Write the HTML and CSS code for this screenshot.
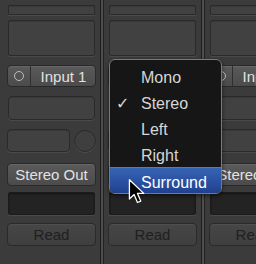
FILE: index.html
```html
<!DOCTYPE html>
<html lang="en">
<head>
	<meta charset="UTF-8">
	<title>Channel format</title>
	<link rel="stylesheet" href="styles.css">
</head>
<body>
	<div class="screen">
		<div class="mixer">
			<div class="strip">
				<div class="bar"></div>
				<div class="panel"></div>
				<div class="btn input"><span class="fmt"><i class="ring"></i></span><span class="label">Input 1</span></div>
				<div class="slot"></div>
				<div class="row"><div class="slot short"></div><div class="knob"></div></div>
				<div class="btn out">Stereo Out</div>
				<div class="slot dark"></div>
				<div class="btn read">Read</div>
			</div>
			<div class="divider"></div>
			<div class="strip">
				<div class="bar"></div>
				<div class="panel"></div>
				<div class="btn input"><span class="fmt"><i class="ring"></i></span><span class="label">Input 2</span></div>
				<div class="slot"></div>
				<div class="row"><div class="slot short"></div><div class="knob"></div></div>
				<div class="btn out">Stereo Out</div>
				<div class="slot dark"></div>
				<div class="btn read">Read</div>
			</div>
			<div class="divider"></div>
			<div class="strip">
				<div class="bar"></div>
				<div class="panel"></div>
				<div class="btn input"><span class="fmt"><i class="ring"></i></span><span class="label">Input 3</span></div>
				<div class="slot"></div>
				<div class="row"><div class="slot short"></div><div class="knob"></div></div>
				<div class="btn out">Stereo Out</div>
				<div class="slot dark"></div>
				<div class="btn read">Read</div>
			</div>
		</div>

		<ul class="menu">
			<li>Mono</li>
			<li class="checked"><span class="check">&#10003;</span>Stereo</li>
			<li>Left</li>
			<li>Right</li>
			<li class="current">Surround</li>
		</ul>

		<svg class="cursor" width="20" height="28" viewBox="0 0 16 24">
			<path d="M1.5 1.5 L1.5 18 L5.5 14.2 L8.4 21 L11.2 19.8 L8.4 13.2 L13.8 13.2 Z" fill="#000" stroke="#fff" stroke-width="1.1" stroke-linejoin="round"/>
		</svg>
	</div>
</body>
</html>
```
FILE: styles.css
```css
body,div,ul,li{margin:0;padding:0;}
ul{list-style-type: none;}
body{
	background: #3b3b3b;
	font-family: "Liberation Sans", Arial, sans-serif;
	overflow: hidden;
}
.screen{
	position: relative;
	width: 256px;
	height: 264px;
	overflow: hidden;
}
.mixer{
	display: flex;
	height: 264px;
	padding-left: 3px;
}
.strip{
	flex: none;
	width: 89px;
	padding: 5px 4px 0 4px;
	display: flex;
	flex-direction: column;
	background: #3b3b3b;
}
.divider{
	flex: none;
	width: 2px;
	background: #4e4e4e;
	border-left: 1px solid #1c1c1c;
	border-right: 1px solid #222;
}

/* recessed boxes */
.bar,.panel,.slot{
	box-sizing: border-box;
	margin: 0 1px;
	background: #414141;
	border: 1px solid #2a2a2a;
	box-shadow: 0 1px 0 #4a4a4a, inset 0 1px 0 #383838;
}
.bar{
	height: 10px;
	border-radius: 1px;
}
.panel{
	height: 36px;
	margin-top: 5px;
	border-radius: 2px;
}
.slot{
	height: 24px;
	margin-top: 9px;
	border-radius: 4px;
}
.slot.dark{
	height: 23px;
	margin-top: 6px;
	border-radius: 2px;
	background: #232323;
	border-color: #1b1b1b;
	box-shadow: 0 1px 0 #4a4a4a, inset 0 1px 2px #151515;
}
.row{
	display: flex;
	align-items: center;
	margin-top: 9px;
	height: 23px;
}
.row .slot.short{
	width: 63px;
	height: 23px;
	margin: 0;
}
.knob{
	box-sizing: border-box;
	width: 22px;
	height: 22px;
	margin-left: 4px;
	border-radius: 50%;
	border: 1px solid #2b2b2b;
	background: #3f3f3f;
	box-shadow: 0 1px 0 #4a4a4a;
}

/* buttons */
.btn{
	box-sizing: border-box;
	height: 23px;
	display: flex;
	align-items: center;
	justify-content: center;
	border: 1px solid #2a2a2a;
	border-radius: 4px;
	background: linear-gradient(#5a5a5a, #4b4b4b);
	box-shadow: inset 0 1px 0 #666;
	color: #e2e2e2;
	font-size: 15px;
	white-space: nowrap;
	overflow: hidden;
}
.btn.input{
	height: 22px;
	margin-top: 9px;
	justify-content: flex-start;
}
.btn.input .fmt{
	width: 22px;
	height: 100%;
	display: flex;
	align-items: center;
	justify-content: center;
	border-right: 1px solid #2f2f2f;
}
.btn.input .ring{
	width: 8px;
	height: 8px;
	border: 1.5px solid #bdbdbd;
	border-radius: 50%;
}
.btn.input .label{
	flex: 1;
	text-align: center;
	padding-left: 1px;
}
.btn.out{
	margin-top: 11px;
}
.btn.read{
	margin-top: 8px;
	background: linear-gradient(#464646, #3f3f3f);
	box-shadow: inset 0 1px 0 #4e4e4e;
	color: #202020;
}

/* popup */
.menu{
	position: absolute;
	left: 109px;
	top: 59px;
	box-sizing: border-box;
	width: 113px;
	height: 135px;
	padding-top: 3px;
	background: #161616;
	border: 1px solid #7a7a7a;
	border-radius: 6px;
	box-shadow: 0 2px 4px rgba(0,0,0,0.5);
	overflow: hidden;
}
.menu li{
	position: relative;
	height: 26px;
	line-height: 30px;
	padding-left: 31px;
	font-size: 16px;
	color: #d6d6d6;
}
.menu li .check{
	position: absolute;
	left: 6px;
	top: 0;
	font-family: "DejaVu Sans", sans-serif;
	font-size: 16px;
	font-weight: bold;
	color: #d6d6d6;
}
.menu li.current{
	background: linear-gradient(#3763b4, #1f4290);
	color: #fff;
	border-top: 1px solid #4c7bcf;
	line-height: 29px;
	box-sizing: border-box;
}
.cursor{
	position: absolute;
	left: 127px;
	top: 178px;
}
```
